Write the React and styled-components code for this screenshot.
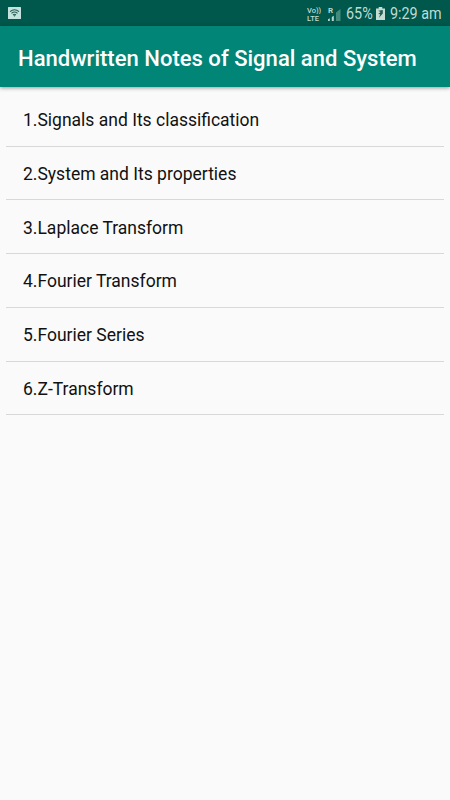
import styled, { createGlobalStyle } from "styled-components";

const topics = [
  "1.Signals and Its classification",
  "2.System and Its properties",
  "3.Laplace Transform",
  "4.Fourier Transform",
  "5.Fourier Series",
  "6.Z-Transform",
];

export default function App() {
  return (
    <>
      <GlobalStyle />
      <Screen>
        <StatusBar>
          <WifiIcon />
          <StatusGroup>
            <Volte>
              <VolteLine>Vo))</VolteLine>
              <VolteLine>LTE</VolteLine>
            </Volte>
            <Network>
              <span>R</span>
              <SignalIcon />
            </Network>
            <StatusText $width="25px">65%</StatusText>
            <BatteryIcon />
            <StatusText $width="51px">9:29 am</StatusText>
          </StatusGroup>
        </StatusBar>
        <AppBar>
          <Title>Handwritten Notes of Signal and System</Title>
        </AppBar>
        <List>
          {topics.map((topic) => (
            <Item key={topic}>{topic}</Item>
          ))}
        </List>
      </Screen>
    </>
  );
}

function WifiIcon() {
  return (
    <svg width="13" height="14" viewBox="0 0 13 14">
      <rect width="13" height="12" rx="0.5" fill="#c5e3dd" />
      <path
        d="M2 4.7Q6.5 .9 11 4.7M3.5 6.3Q6.5 3.8 9.5 6.3M5 7.9Q6.5 6.6 8 7.9"
        fill="none"
        stroke="#24594f"
        strokeWidth="1.1"
      />
      <path d="M5.3 8.3h2.4L6.5 9.8z" fill="#24594f" />
    </svg>
  );
}

function SignalIcon() {
  return (
    <svg width="13" height="13" viewBox="0 0 13 13">
      <path d="M0 11.2l1.8-1V13H0zM3.8 9l2-1.3V13h-2z" fill="#b5d8d0" />
      <path d="M8 4.5L12.5 1v12H8z" fill="#438b7d" />
    </svg>
  );
}

function BatteryIcon() {
  return (
    <svg width="9" height="15" viewBox="0 0 9 15">
      <path d="M2.7 0h3.6v1.5H9V13H0V1.5h2.7z" fill="#c5dcd5" />
      <path d="M2.2 3.7L6.8 3v3.5L3 10.7l1.2-3.5-2-.3L4.6 5z" fill="#24594f" />
    </svg>
  );
}

const GlobalStyle = createGlobalStyle`
  * {
    box-sizing: border-box;
  }
  body {
    margin: 0;
    background: #fafafa;
    font-family: Roboto, sans-serif;
  }
`;

const Screen = styled.div`
  height: 100vh;
  overflow: hidden;
  background: #fafafa;
`;

const StatusBar = styled.div`
  height: 26px;
  padding: 2px 9px 0 8px;
  display: flex;
  align-items: center;
  justify-content: space-between;
  background: #00574b;
`;

const StatusGroup = styled.div`
  display: flex;
  align-items: center;
  gap: 5px;
`;

const Volte = styled.div`
  width: 14px;
  margin-right: 2px;
  display: flex;
  flex-direction: column;
  gap: 1px;
`;

const VolteLine = styled.span`
  height: 7px;
  overflow: hidden;
  font-size: 7.5px;
  line-height: 7px;
  font-weight: 500;
  white-space: nowrap;
  color: #bcdcd5;
`;

const Network = styled.div`
  display: grid;
  width: 13px;
  > * {
    grid-area: 1 / 1;
  }
  span {
    font-size: 8px;
    line-height: 6px;
    font-weight: 700;
    color: #b5d8d0;
  }
`;

const StatusText = styled.span`
  width: ${({ $width }) => $width};
  font-size: 16.5px;
  line-height: 20px;
  white-space: nowrap;
  color: #bcdcd5;
  transform: scaleX(0.87);
  transform-origin: left center;
`;

const AppBar = styled.header`
  height: 61px;
  padding: 4px 18px 0;
  display: flex;
  align-items: center;
  background: #008577;
  box-shadow: 0 1px 4px rgba(0, 0, 0, 0.4);
`;

const Title = styled.h1`
  margin: 0;
  font-size: 22.05px;
  font-weight: 500;
  white-space: nowrap;
  color: #fff;
`;

const List = styled.ul`
  margin: 0;
  padding: 5.9px 6px 0;
  list-style: none;
`;

const Item = styled.li`
  height: 53.75px;
  padding: 1.6px 0 0 17px;
  display: flex;
  align-items: center;
  font-size: 17.5px;
  color: #111;
  border-bottom: 1px solid #d8d8d8;
`;
